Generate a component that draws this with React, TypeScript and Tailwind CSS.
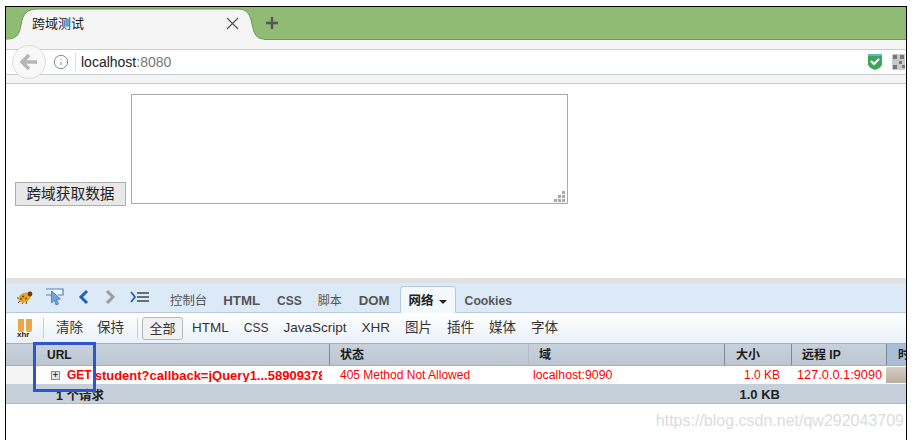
import { Info } from 'lucide-react'

const sans = "font-['Liberation_Sans','Noto_Sans_CJK_SC',sans-serif]"

function FilterItem({ label, active, className = 'text-[13.5px]' }: { label: string; active?: boolean; className?: string }) {
  if (active) {
    return (
      <span className="flex h-[23px] w-[41px] items-center justify-center rounded-[3px] border border-[#b4b8bd] bg-[#f0f1f2] text-[13px] leading-none text-[#333]">
        {label}
      </span>
    )
  }
  return <span className={`leading-none text-[#333] ${className}`}>{label}</span>
}

function HeaderCell({ label, className }: { label: string; className: string }) {
  return (
    <div className={`flex h-full shrink-0 items-center border-l text-[12px] font-bold text-[#1a1a1a] ${className}`}>
      {label}
    </div>
  )
}

export default function App() {
  return (
    <div className={`relative h-[440px] w-[914px] overflow-hidden bg-white pl-[5px] pt-[6px] ${sans}`}>
      <div className="flex h-[434px] w-[902px] flex-col border-x border-t border-x-black border-t-black bg-white">
        {/* tab strip */}
        <div className="relative flex h-[33px] shrink-0 items-end border-b border-[#6c9a55] bg-[#8fbb74]">
          <svg className="absolute left-0 top-0" width="262" height="33" viewBox="0 0 262 33">
            <path d="M0 33 L0 32 C10 32 13 29 15 18 C17 6 21 2 33 2 L232 2 C241 2 244 7 246 17 C248 28 251 32 258 32 L258 33 Z" fill="#f5f5f5" />
            <path d="M0 32 C10 32 13 29 15 18 C17 6 21 2 33 2 L232 2 C241 2 244 7 246 17 C248 28 251 32 258 32" fill="none" stroke="#6c9a55" strokeWidth="1" />
          </svg>
          <div className="relative flex h-full w-[280px] items-center">
            <span className="ml-[26px] w-[52px] text-[13px] leading-none text-[#222]">跨域测试</span>
            <svg className="ml-[142px]" width="13" height="13" viewBox="0 0 13 13">
              <path d="M1 1 L12 12 M12 1 L1 12" stroke="#555" strokeWidth="1.2" />
            </svg>
            <svg className="ml-[26px]" width="14" height="14" viewBox="0 0 14 14">
              <path d="M7 1 V13 M1 7 H13" stroke="#555" strokeWidth="2.4" />
            </svg>
          </div>
        </div>

        {/* address bar */}
        <div className="flex h-[44px] shrink-0 flex-col justify-center border-b border-[#c9c9c9] bg-[#f5f5f5]">
          <div className="relative flex h-[26px] items-center border-y border-[#c5ccd6] bg-white pl-[46px] pr-[1px]">
            <div className="absolute left-[6px] top-[-5px] flex h-[34px] w-[34px] items-center justify-center rounded-full border border-[#dcdcdc] bg-[#f8f8f8]">
              <svg width="18" height="16" viewBox="0 0 18 16">
                <path d="M9 1 L2 8 L9 15 M2 8 H17" fill="none" stroke="#b5b5b5" strokeWidth="3.4" />
              </svg>
            </div>
            <Info size={16} strokeWidth={1.3} className="ml-[1px] text-[#777]" />
            <div className="ml-[6px] h-[18px] w-px bg-[#dcdcdc]" />
            <span className="ml-[5px] text-[14px] leading-none text-[#222]">
              localhost<span className="text-[#777]">:8080</span>
            </span>
            <div className="ml-auto flex items-center gap-[9px]">
              <svg width="16" height="18" viewBox="0 0 16 18">
                <path d="M1 1 H15 V11 C15 14 11 16 8 17 C5 16 1 14 1 11 Z" fill="#3ea55b" />
                <path d="M1 1 H15 V3 H1 Z" fill="#5fb7d0" />
                <path d="M4 8 L7 11 L12 6" fill="none" stroke="#fff" strokeWidth="2" />
              </svg>
              <svg width="13" height="16" viewBox="0 0 13 16">
                <rect width="13" height="16" fill="#c9c9c9" />
                <path d="M1 1 H5 V5 H1 Z M8 1 H12 V5 H8 Z M1 11 H5 V15 H1 Z M7 7 H10 V10 H7 Z M10 11 H13 V14 H10 Z" fill="#777" />
              </svg>
            </div>
          </div>
        </div>

        {/* page body */}
        <div className="flex h-[194px] shrink-0 items-end pb-[74px] pl-[9px]">
          <button className="-mb-[2px] h-[24px] w-[111px] border border-[#adadad] bg-[#e8e8e8] text-[14.7px] leading-none text-[#222]">
            跨域获取数据
          </button>
          <div className="relative ml-[5px] h-[110px] w-[437px] border border-[#a9a9a9] bg-white">
            <svg className="absolute bottom-[1px] right-[1px]" width="12" height="12" viewBox="0 0 12 12">
              <path d="M8 1 H11 V4 H8 Z M4 5 H7 V8 H4 Z M8 5 H11 V8 H8 Z M0 9 H3 V12 H0 Z M4 9 H7 V12 H4 Z M8 9 H11 V12 H8 Z" fill="#a8a8a8" />
            </svg>
          </div>
        </div>

        {/* firebug */}
        <div className="h-[5px] shrink-0 bg-[#e0e0e0]" />
        <div className="flex h-[30px] shrink-0 items-end border-b border-[#b8c8da] bg-[#dce9f7] pl-[10px]">
          <div className="mb-[6px] flex items-center">
            <svg width="18" height="15" viewBox="0 0 18 15">
              <path d="M2 13 L6 9 M6 14 L9 10 M10 14 L11 10 M1 8 L4 8" stroke="#6b4a20" strokeWidth="1" />
              <ellipse cx="8.5" cy="7.5" rx="6.5" ry="4.6" fill="#e9a326" transform="rotate(-22 8.5 7.5)" />
              <circle cx="14" cy="4" r="2.4" fill="#6e3a12" />
              <circle cx="7" cy="6.5" r="1.1" fill="#7a3d10" />
              <circle cx="10" cy="8.5" r="1" fill="#7a3d10" />
              <circle cx="5" cy="9" r="0.9" fill="#7a3d10" />
            </svg>
            <svg className="ml-[11px]" width="19" height="18" viewBox="0 0 19 18">
              <path d="M1 1 H18 V7 H13 M6 7 H1 Z" fill="#eef5fc" stroke="#4d83bd" strokeWidth="1.2" />
              <path d="M6.5 3 L15.5 11 L11.5 11.5 L13.5 16 L11 17 L9.3 12.3 L6.5 15 Z" fill="#6ea3de" stroke="#2f6cb0" strokeWidth="0.7" />
            </svg>
            <svg className="ml-[14px]" width="11" height="16" viewBox="0 0 11 16">
              <path d="M9 2 L3 8 L9 14" fill="none" stroke="#1f5fc0" strokeWidth="3" />
            </svg>
            <svg className="ml-[16px]" width="11" height="16" viewBox="0 0 11 16">
              <path d="M2 2 L8 8 L2 14" fill="none" stroke="#9c9c9c" strokeWidth="3" />
            </svg>
            <svg className="ml-[14px]" width="19" height="12" viewBox="0 0 19 12">
              <path d="M1 1 L5 6 L1 11" fill="none" stroke="#1f5fc0" strokeWidth="1.8" />
              <path d="M7 2 H19 M7 6 H19 M7 10 H19" stroke="#444" strokeWidth="1.6" />
            </svg>
          </div>
          <div className="ml-[21px] flex h-full items-end font-bold leading-none text-[#555]">
            <span className="mb-[5px] text-[12.4px] font-normal">控制台</span>
            <span className="mb-[5px] ml-[16px] text-[13.3px]">HTML</span>
            <span className="mb-[5px] ml-[17px] text-[12px]">CSS</span>
            <span className="mb-[5px] ml-[16px] text-[12px] font-normal">脚本</span>
            <span className="mb-[5px] ml-[17px] text-[13.2px]">DOM</span>
            <div className="relative top-px ml-[10px] flex h-[27px] w-[56px] items-center justify-center gap-[5px] rounded-t-[4px] border border-b-0 border-[#b8c8da] bg-[#f3f8fd] pt-[3px] text-[12.5px] text-[#222]">
              <span>网络</span>
              <span className="h-0 w-0 border-x-[4.5px] border-t-[4.5px] border-x-transparent border-t-[#222]" />
            </div>
            <span className="mb-[5px] ml-[9px] text-[12.2px]">Cookies</span>
          </div>
        </div>
        <div className="flex h-[30px] shrink-0 items-center bg-gradient-to-b from-[#ffffff] to-[#e9f0f8] pl-[11px]">
          <div className="relative h-[19px] w-[16px]">
            <div className="absolute left-[1px] top-0 h-[13px] w-[6px] rounded-b-[2px] bg-[#e8a84a]" />
            <div className="absolute left-[9px] top-0 h-[13px] w-[6px] rounded-b-[2px] bg-[#e8a84a]" />
            <span className="absolute left-0 top-[12px] text-[8px] font-bold leading-none text-[#222]">xhr</span>
          </div>
          <div className="ml-[10px] h-[20px] w-px bg-[#c5d0dc]" />
          <div className="ml-[12px] flex items-center gap-[14px]">
            <FilterItem label="清除" />
            <FilterItem label="保持" />
          </div>
          <div className="ml-[13px] h-[20px] w-px bg-[#c5d0dc]" />
          <div className="ml-[4px] flex items-center gap-[15px]">
            <FilterItem label="全部" active />
            <div className="-ml-[6px] flex items-center gap-[15px]">
              <FilterItem label="HTML" />
              <FilterItem label="CSS" className="text-[12px]" />
              <FilterItem label="JavaScript" />
              <FilterItem label="XHR" />
              <FilterItem label="图片" />
              <FilterItem label="插件" />
              <FilterItem label="媒体" />
              <FilterItem label="字体" />
            </div>
          </div>
        </div>

        {/* request table */}
        <div className="flex h-[23px] shrink-0 items-center border-y border-[#a4aebb] bg-gradient-to-b from-[#c9d2dc] to-[#bcc6d1]">
          <div className="h-full w-[28px] shrink-0" />
          <div className="flex h-full w-[295px] shrink-0 items-center pl-[13px] text-[12px] font-bold text-[#1a1a1a]">URL</div>
          <HeaderCell label="状态" className="w-[199px] border-[#7f8a96] pl-[10px]" />
          <HeaderCell label="域" className="w-[196px] border-[#b3bdc8] pl-[10px]" />
          <HeaderCell label="大小" className="w-[67px] border-[#7f8a96] pl-[11px]" />
          <HeaderCell label="远程 IP" className="w-[95px] border-[#7f8a96] pl-[10px]" />
          <HeaderCell label="时" className="min-w-0 flex-1 overflow-hidden whitespace-nowrap border-[#7f8a96] bg-[#a9bdd4] pl-[11px]" />
        </div>
        <div className="flex h-[18px] shrink-0 items-center bg-white text-[12px] leading-none text-[#f00]">
          <div className="h-full w-[28px] shrink-0 bg-[#f4f4f4]" />
          <div className="flex w-[295px] shrink-0 items-center whitespace-nowrap pl-[17px] font-bold">
            <span className="mr-[7px] flex h-[9px] w-[9px] shrink-0 items-center justify-center border border-[#8a8a8a] bg-[#e5e5e5] text-[9px] font-bold leading-none text-[#333]">+</span>
            <span className="mr-[3px]">GET</span>
            <span className="w-[227px] overflow-hidden text-[13px]">student?callback=jQuery1...58909378</span>
          </div>
          <div className="w-[199px] shrink-0 pl-[11px]">405 Method Not Allowed</div>
          <div className="w-[196px] shrink-0 pl-[5px] text-[12.3px]">localhost:9090</div>
          <div className="w-[67px] shrink-0 pr-[11px] text-right">1.0 KB</div>
          <div className="w-[95px] shrink-0 pl-[6px] text-[12.75px]">127.0.0.1:9090</div>
          <div className="h-[16px] min-w-0 flex-1 bg-gradient-to-b from-[#d8cfc4] to-[#b9ac9c]" />
        </div>
        <div className="flex h-[20px] shrink-0 items-center border-b border-[#b0bac5] bg-[#c6d0db] font-bold leading-none text-[#222]">
          <div className="w-[323px] shrink-0 pl-[50px] pt-[5px] text-[12.5px]">1 个请求</div>
          <div className="w-[395px] shrink-0" />
          <div className="w-[67px] shrink-0 pr-[11px] pt-[1px] text-right text-[13px]">1.0 KB</div>
        </div>

        <div className="flex min-h-0 flex-1 justify-end pr-[2px] pt-[9px]">
          <span className="text-[16px] leading-none text-[#dcdcdc]">https://blog.csdn.net/qw292043709</span>
        </div>
      </div>

      {/* blue annotation box */}
      <div className="absolute left-[33px] top-[342px] h-[50px] w-[63px] border-[3px] border-[#2f55cc]" />
    </div>
  )
}
